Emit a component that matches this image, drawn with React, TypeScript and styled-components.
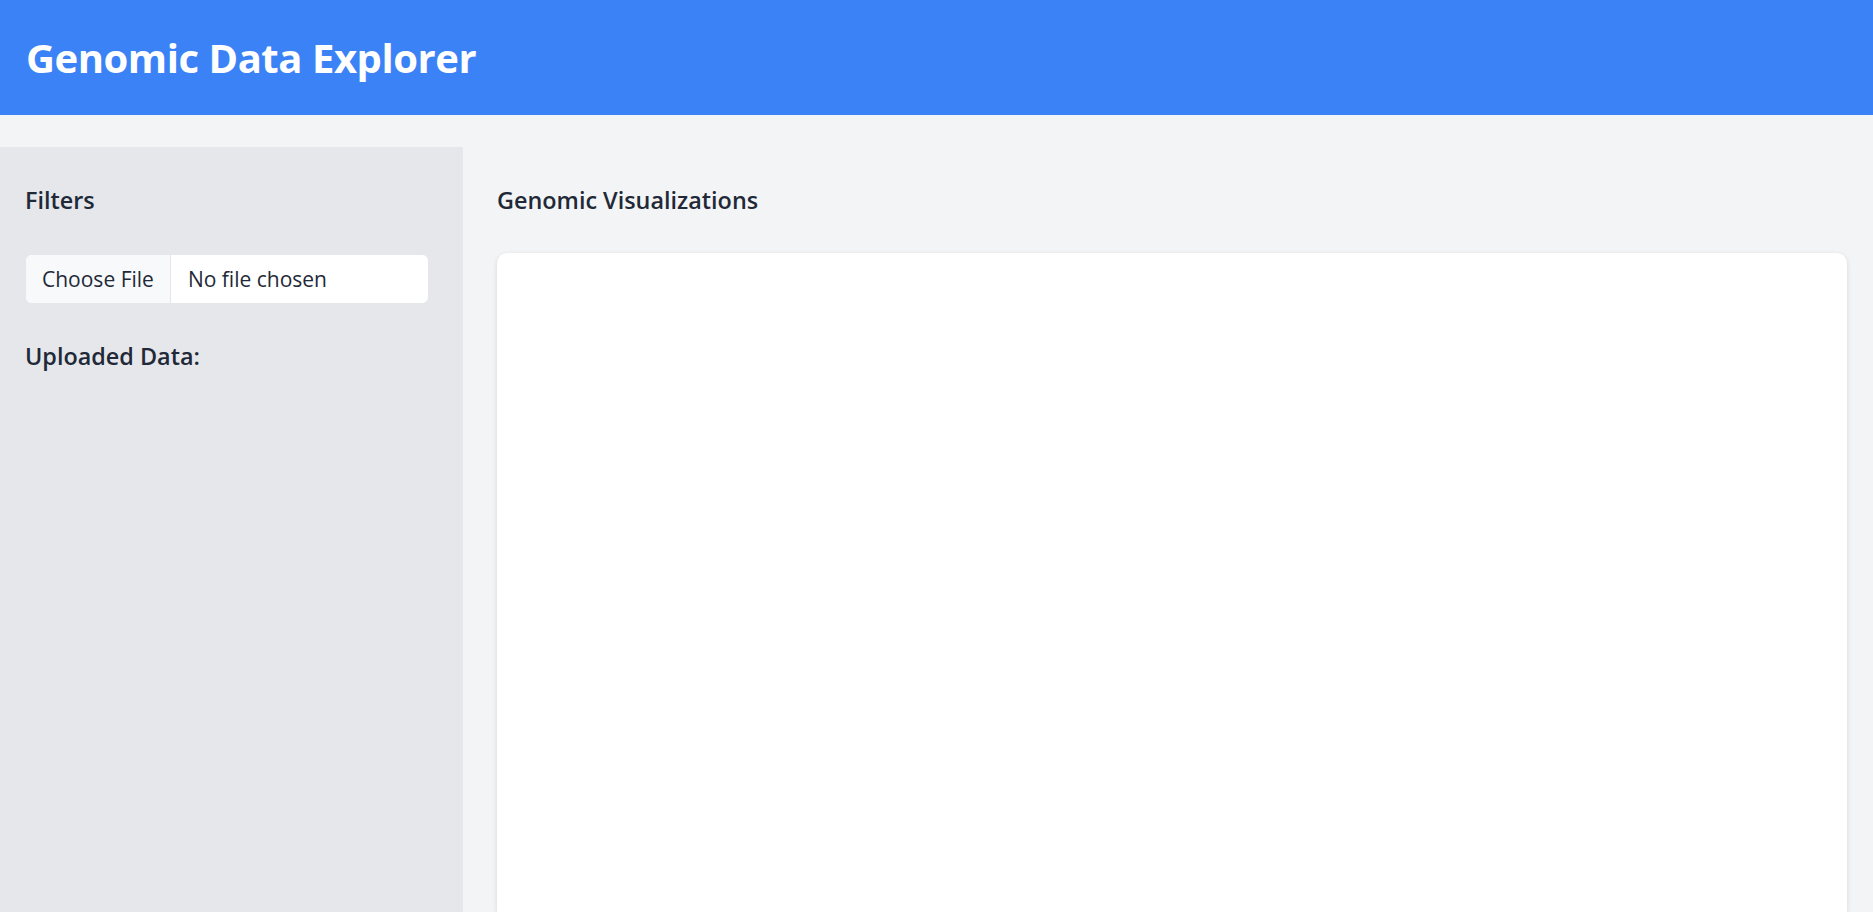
import React from "react";
import styled, { createGlobalStyle } from "styled-components";

const GlobalStyle = createGlobalStyle`
  html, body {
    margin: 0;
    padding: 0;
    height: 100%;
    overflow: hidden;
  }
  body {
    background: #f3f4f6;
    font-family: "Open Sans", "Noto Sans", sans-serif;
    color: #1f2937;
  }
  * { box-sizing: border-box; }
`;

const Page = styled.div`
  display: flex;
  flex-direction: column;
  height: 912px;
`;

const Header = styled.header`
  background: #3b82f6;
  height: 115px;
  display: flex;
  align-items: center;
  padding: 0 26px;
  flex-shrink: 0;
`;

const Title = styled.h1`
  margin: 0;
  color: #ffffff;
  font-size: 40px;
  font-weight: 700;
  letter-spacing: -0.45px;
  line-height: 1;
  padding-top: 1px;
`;

const Body = styled.div`
  display: flex;
  flex: 1;
  margin-top: 32px;
  min-height: 0;
`;

const Sidebar = styled.aside`
  width: 463px;
  flex-shrink: 0;
  background: #e5e7eb;
  padding: 37px 34px 0 25px;
  display: flex;
  flex-direction: column;
`;

const SectionTitle = styled.h2<{ $gap: number }>`
  margin: 0 0 ${(p) => p.$gap}px 0;
  font-size: 23.4px;
  font-weight: 600;
  line-height: 32px;
  color: #1f2937;
`;

const FileInput = styled.input`
  display: block;
  width: 100%;
  height: 50px;
  background: #ffffff;
  border: 1px solid #e5e7eb;
  border-radius: 7px;
  font-family: "Open Sans", "Noto Sans", sans-serif;
  font-size: 21px;
  color: #1f2937;
  padding: 0;
  margin-bottom: 36px;
  overflow: hidden;

  &::file-selector-button {
    height: 48px;
    margin: 0 17px 0 0;
    padding: 0 16px 0 16px;
    border: none;
    border-right: 1px solid #e5e7eb;
    background: #f8f9fb;
    font-family: "Open Sans", "Noto Sans", sans-serif;
    font-size: 21px;
    color: #1f2937;
  }
`;

const Main = styled.main`
  flex: 1;
  padding: 37px 26px 0 34px;
  display: flex;
  flex-direction: column;
  min-width: 0;
`;

const Card = styled.section`
  flex: 1;
  background: #ffffff;
  border-radius: 10px 10px 0 0;
  box-shadow: 0 1px 4px rgba(0, 0, 0, 0.08), 0 2px 6px rgba(0, 0, 0, 0.05);
`;

export default function App() {
  return (
    <>
      <GlobalStyle />
      <Page>
        <Header>
          <Title>Genomic Data Explorer</Title>
        </Header>
        <Body>
          <Sidebar>
            <SectionTitle $gap={38}>Filters</SectionTitle>
            <FileInput type="file" />
            <SectionTitle $gap={0}>Uploaded Data:</SectionTitle>
          </Sidebar>
          <Main>
            <SectionTitle $gap={37}>Genomic Visualizations</SectionTitle>
            <Card />
          </Main>
        </Body>
      </Page>
    </>
  );
}
